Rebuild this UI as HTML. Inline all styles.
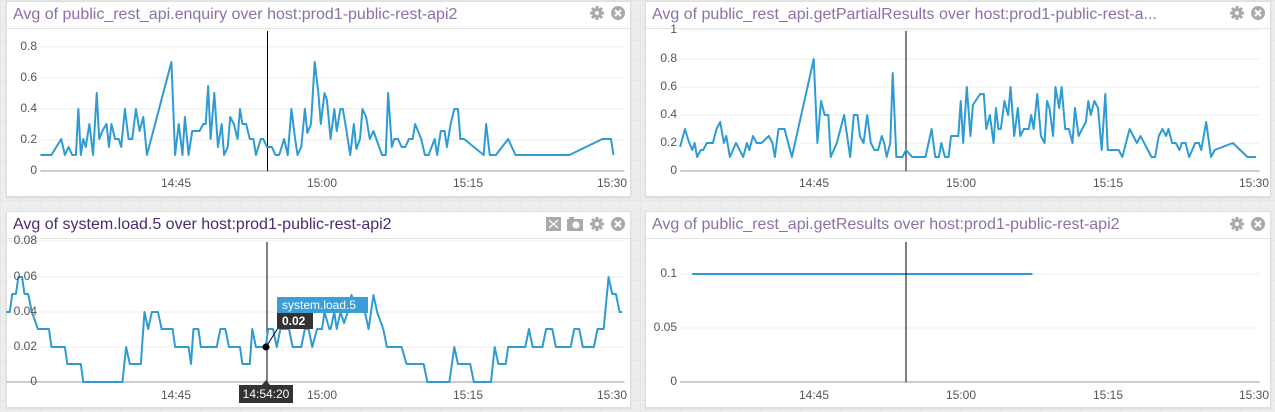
<!DOCTYPE html>
<html><head><meta charset="utf-8"><style>
body{margin:0;width:1275px;height:412px;background:#ededed;position:relative;overflow:hidden;font-family:"Liberation Sans",sans-serif;
background-image:linear-gradient(#e6e6e6 1px,transparent 1px),linear-gradient(90deg,#e6e6e6 1px,transparent 1px);background-size:20px 20px;}
.p{position:absolute;background:#fff;border:1px solid #ddd;box-shadow:0 1px 2px rgba(0,0,0,.08)}
.t{position:absolute;left:6px;top:4px;font-size:16px;color:#8c6fa9;white-space:nowrap}
.hb{position:absolute;left:0;right:0;top:26px;border-top:1px solid #e4e4e4}
svg.c{position:absolute;left:0;top:0}
.l{position:absolute;font-size:12px;color:#555;white-space:nowrap}
.yl{text-align:right;width:30px}
.cur{shape-rendering:crispEdges}
</style></head><body>

<div class="p" style="left:6px;top:1px;width:623px;height:194px"><div class="t">Avg of public_rest_api.enquiry over host:prod1-public-rest-api2</div><div class="hb"></div></div>
<div class="p" style="left:645px;top:1px;width:624px;height:194px"><div class="t">Avg of public_rest_api.getPartialResults over host:prod1-public-rest-a...</div><div class="hb"></div></div>
<div class="p" style="left:6px;top:211px;width:623px;height:195px"><div class="t" style="color:#4b2b70">Avg of system.load.5 over host:prod1-public-rest-api2</div><div class="hb"></div></div>
<div class="p" style="left:645px;top:211px;width:624px;height:195px"><div class="t">Avg of public_rest_api.getResults over host:prod1-public-rest-api2</div><div class="hb"></div></div>

<svg class="c" style="left:0;top:0" width="640" height="200" viewBox="0 0 522.67 200" preserveAspectRatio="none">
<g stroke="#eee"><line x1="33" x2="510" y1="46.7" y2="46.7" vector-effect="non-scaling-stroke"/><line x1="33" x2="510" y1="77.7" y2="77.7" vector-effect="non-scaling-stroke"/><line x1="33" x2="510" y1="108.7" y2="108.7" vector-effect="non-scaling-stroke"/><line x1="33" x2="510" y1="139.7" y2="139.7" vector-effect="non-scaling-stroke"/></g>
<line x1="33" x2="510" y1="171" y2="171" stroke="#ccc" vector-effect="non-scaling-stroke" stroke-width="2"/>
<line class="cur" x1="218.3" x2="218.3" y1="31" y2="171" stroke="#000" vector-effect="non-scaling-stroke"/>
<polyline fill="none" stroke="#2f9bd3" stroke-width="2" vector-effect="non-scaling-stroke" stroke-linejoin="round" points="33,155 42,155 50,139 53,155 56,147 59,155 62,155 64,109 66,155 68,139 70,147 73,124 76,155 79,93 81,139 84,130 87,124 89,147 91,124 94,139 97,139 99,147 102,109 105,139 108,139 111,109 114,131 117,117 120,155 140,62 143,155 146,124 149,155 151,117 154,155 157,131 163,131 166,124 168,124 170,86 172,139 175,93 178,147 181,124 183,155 186,147 188,117 191,124 194,139 196,109 198,124 201,124 204,139 207,139 209,155 213,139 215,139 218,147 222,147 225,155 228,155 232,139 235,155 238,109 241,139 243,155 246,147 249,109 251,133 254,124 257,62 260,93 262,124 265,93 267,100 270,139 273,109 275,131 278,109 280,109 283,131 286,155 289,124 291,149 294,139 296,109 299,117 302,139 305,131 312,155 315,155 317,93 320,147 322,139 325,139 328,147 331,147 334,139 337,139 339,124 344,139 347,155 350,155 355,139 357,155 360,131 363,131 365,147 368,124 371,109 374,109 376,139 379,139 395,155 397,124 400,155 405,155 415,139 421,155 465,155 492,139 499,139 501,155"/>
</svg>
<div class="l yl" style="left:7px;top:39px">0.8</div><div class="l yl" style="left:7px;top:70px">0.6</div><div class="l yl" style="left:7px;top:101px">0.4</div><div class="l yl" style="left:7px;top:132px">0.2</div><div class="l yl" style="left:7px;top:163px">0</div>
<div class="l" style="left:161px;top:176px">14:45</div><div class="l" style="left:307px;top:176px">15:00</div><div class="l" style="left:453px;top:176px">15:15</div><div class="l" style="left:597px;top:176px">15:30</div>

<svg class="c" style="left:640px;top:0" width="635" height="200" viewBox="0 0 522.67 200" preserveAspectRatio="none">
<g stroke="#eee"><line x1="33" x2="510" y1="30" y2="30" vector-effect="non-scaling-stroke"/><line x1="33" x2="510" y1="59" y2="59" vector-effect="non-scaling-stroke"/><line x1="33" x2="510" y1="87" y2="87" vector-effect="non-scaling-stroke"/><line x1="33" x2="510" y1="115" y2="115" vector-effect="non-scaling-stroke"/><line x1="33" x2="510" y1="143" y2="143" vector-effect="non-scaling-stroke"/></g>
<line x1="33" x2="510" y1="171" y2="171" stroke="#ccc" vector-effect="non-scaling-stroke" stroke-width="2"/>
<line class="cur" x1="219" x2="219" y1="31" y2="171" stroke="#000" vector-effect="non-scaling-stroke"/>
<polyline fill="none" stroke="#2f9bd3" stroke-width="2" vector-effect="non-scaling-stroke" stroke-linejoin="round" points="33,147 37,129 40,141 43,150 45,143 47,157 50,150 52,150 55,143 60,143 63,129 66,122 69,143 71,136 74,157 79,143 85,157 88,143 90,150 93,136 96,143 100,143 106,136 109,143 111,157 114,129 119,129 125,157 143,59 146,143 149,101 152,115 155,115 157,157 162,143 168,115 173,157 176,115 179,115 181,136 184,143 187,115 190,143 193,150 196,150 199,136 201,143 203,157 206,143 208,73 211,157 216,157 219,150 224,157 235,157 240,129 243,157 246,157 248,143 251,157 254,157 256,136 260,136 262,136 264,101 266,143 269,87 272,136 274,105 280,94 283,94 285,129 288,115 291,143 293,108 295,129 297,129 300,101 303,115 305,87 308,136 311,108 313,136 316,129 320,129 322,115 324,129 327,94 330,136 333,143 335,101 337,108 340,136 342,87 345,108 347,87 350,129 353,129 356,143 358,108 361,136 367,122 369,101 371,115 374,101 377,108 380,150 383,94 385,150 394,150 397,157 403,129 409,143 412,136 418,150 421,157 424,157 427,136 430,129 433,136 435,129 438,143 441,143 444,150 446,143 449,143 452,157 457,143 460,143 462,150 466,122 470,157 473,150 488,143 500,157 507,157"/>
</svg>
<div class="l yl" style="left:647px;top:22px">1</div><div class="l yl" style="left:647px;top:51px">0.8</div><div class="l yl" style="left:647px;top:79px">0.6</div><div class="l yl" style="left:647px;top:107px">0.4</div><div class="l yl" style="left:647px;top:135px">0.2</div><div class="l yl" style="left:647px;top:163px">0</div>
<div class="l" style="left:799px;top:176px">14:45</div><div class="l" style="left:946px;top:176px">15:00</div><div class="l" style="left:1093px;top:176px">15:15</div><div class="l" style="left:1239px;top:176px">15:30</div>

<svg class="c" style="left:0;top:205px" width="640" height="207" viewBox="0 0 522.67 207" preserveAspectRatio="none">
<g stroke="#eee"><line x1="5" x2="510" y1="36" y2="36" vector-effect="non-scaling-stroke"/><line x1="5" x2="510" y1="72" y2="72" vector-effect="non-scaling-stroke"/><line x1="5" x2="510" y1="107" y2="107" vector-effect="non-scaling-stroke"/><line x1="5" x2="510" y1="142" y2="142" vector-effect="non-scaling-stroke"/></g>
<line x1="5" x2="510" y1="177" y2="177" stroke="#ccc" vector-effect="non-scaling-stroke" stroke-width="2"/>
<line class="cur" x1="218" x2="218" y1="37" y2="180" stroke="#000" vector-effect="non-scaling-stroke"/>
<polyline fill="none" stroke="#2f9bd3" stroke-width="2" vector-effect="non-scaling-stroke" stroke-linejoin="round" points="5,107 8,107 10,89 13,89 15,72 18,72 20,89 23,89 26,107 31,124 40,124 42,142 53,142 55,159 66,159 68,177 100,177 103,142 106,159 115,159 118,107 121,124 124,107 129,107 132,124 141,124 143,142 154,142 156,159 158,124 162,124 164,142 177,142 180,124 184,124 187,142 196,142 198,159 204,159 206,124 209,142 214,142 217,142 219,124 223,124 226,142 229,124 236,124 239,142 246,142 249,124 252,124 255,142 259,124 263,124 265,107 269,124 270,124 273,107 275,124 278,107 281,118 284,107 287,90 292,107 298,107 301,124 305,90 308,107 313,124 316,142 328,142 332,159 346,159 349,177 367,177 371,142 374,159 384,159 387,177 401,177 404,142 407,159 413,159 415,142 429,142 432,124 435,142 443,142 446,124 451,124 454,142 466,142 469,124 473,124 476,142 485,142 488,124 493,124 497,72 500,89 503,89 506,107 508,107"/>
</svg>
<div class="l yl" style="left:7px;top:233px">0.08</div><div class="l yl" style="left:7px;top:269px">0.06</div><div class="l yl" style="left:7px;top:304px">0.04</div><div class="l yl" style="left:7px;top:339px">0.02</div><div class="l yl" style="left:7px;top:374px">0</div>
<div class="l" style="left:161px;top:388px">14:45</div><div class="l" style="left:307px;top:388px">15:00</div><div class="l" style="left:453px;top:388px">15:15</div><div class="l" style="left:597px;top:388px">15:30</div>
<svg class="c" width="1275" height="412" style="pointer-events:none">
<line x1="266" y1="347" x2="278" y2="328" stroke="#000"/><circle cx="266" cy="347" r="3.5" fill="#000"/>
<polygon points="262,385 266,380 270,385" fill="#333"/>
</svg>
<div style="position:absolute;left:277px;top:297px;width:91px;height:16px;background:#3a9fd6;color:#fff;font-size:12px;line-height:16px;padding-left:5px;box-sizing:border-box">system.load.5</div>
<div style="position:absolute;left:277px;top:313px;width:36px;height:16px;background:#333;color:#fff;font-size:12px;font-weight:bold;line-height:16px;padding-left:5px;box-sizing:border-box">0.02</div>
<div style="position:absolute;left:239px;top:385px;width:54px;height:18px;background:#333;color:#fff;font-size:12px;line-height:18px;text-align:center">14:54:20</div>

<svg class="c" style="left:640px;top:205px" width="635" height="207" viewBox="0 0 522.67 207" preserveAspectRatio="none">
<g stroke="#eee"><line x1="33" x2="510" y1="69" y2="69" vector-effect="non-scaling-stroke"/><line x1="33" x2="510" y1="123" y2="123" vector-effect="non-scaling-stroke"/></g>
<line x1="33" x2="510" y1="177" y2="177" stroke="#ccc" vector-effect="non-scaling-stroke" stroke-width="2"/>
<line x1="43" x2="323" y1="69" y2="69" stroke="#2f9bd3" stroke-width="2" vector-effect="non-scaling-stroke"/>
<line class="cur" x1="219" x2="219" y1="37" y2="177" stroke="#000" vector-effect="non-scaling-stroke"/>
</svg>
<div class="l yl" style="left:647px;top:266px">0.1</div><div class="l yl" style="left:647px;top:320px">0.05</div><div class="l yl" style="left:647px;top:374px">0</div>
<div class="l" style="left:799px;top:388px">14:45</div><div class="l" style="left:946px;top:388px">15:00</div><div class="l" style="left:1093px;top:388px">15:15</div><div class="l" style="left:1239px;top:388px">15:30</div>

<svg class="c" width="1275" height="412">
<defs>
<g id="gear"><circle r="5" fill="#aaa"/><g stroke="#aaa" stroke-width="3"><line x1="0" y1="-7" x2="0" y2="7"/><line x1="-7" y1="0" x2="7" y2="0"/><line x1="-5" y1="-5" x2="5" y2="5"/><line x1="-5" y1="5" x2="5" y2="-5"/></g><circle r="2" fill="#fff"/></g>
<g id="close"><circle r="7" fill="#aaa"/><g stroke="#fff" stroke-width="2"><line x1="-3" y1="-3" x2="3" y2="3"/><line x1="-3" y1="3" x2="3" y2="-3"/></g></g>
</defs>
<use href="#gear" x="597" y="13"/><use href="#close" x="618" y="13"/>
<use href="#gear" x="1237" y="13"/><use href="#close" x="1258" y="13"/>
<use href="#gear" x="597" y="224"/><use href="#close" x="618" y="224"/>
<use href="#gear" x="1237" y="224"/><use href="#close" x="1258" y="224"/>
<rect x="546" y="217" width="15" height="14" fill="#aaa"/><g stroke="#fff" stroke-width="1.3"><line x1="549" y1="220" x2="558" y2="228"/><line x1="549" y1="228" x2="558" y2="220"/></g>
<rect x="567" y="219" width="16" height="12" rx="1" fill="#aaa"/><rect x="569" y="217" width="5" height="3" fill="#aaa"/><circle cx="576" cy="225" r="3.5" fill="#fff"/>
</svg>
</body></html>
